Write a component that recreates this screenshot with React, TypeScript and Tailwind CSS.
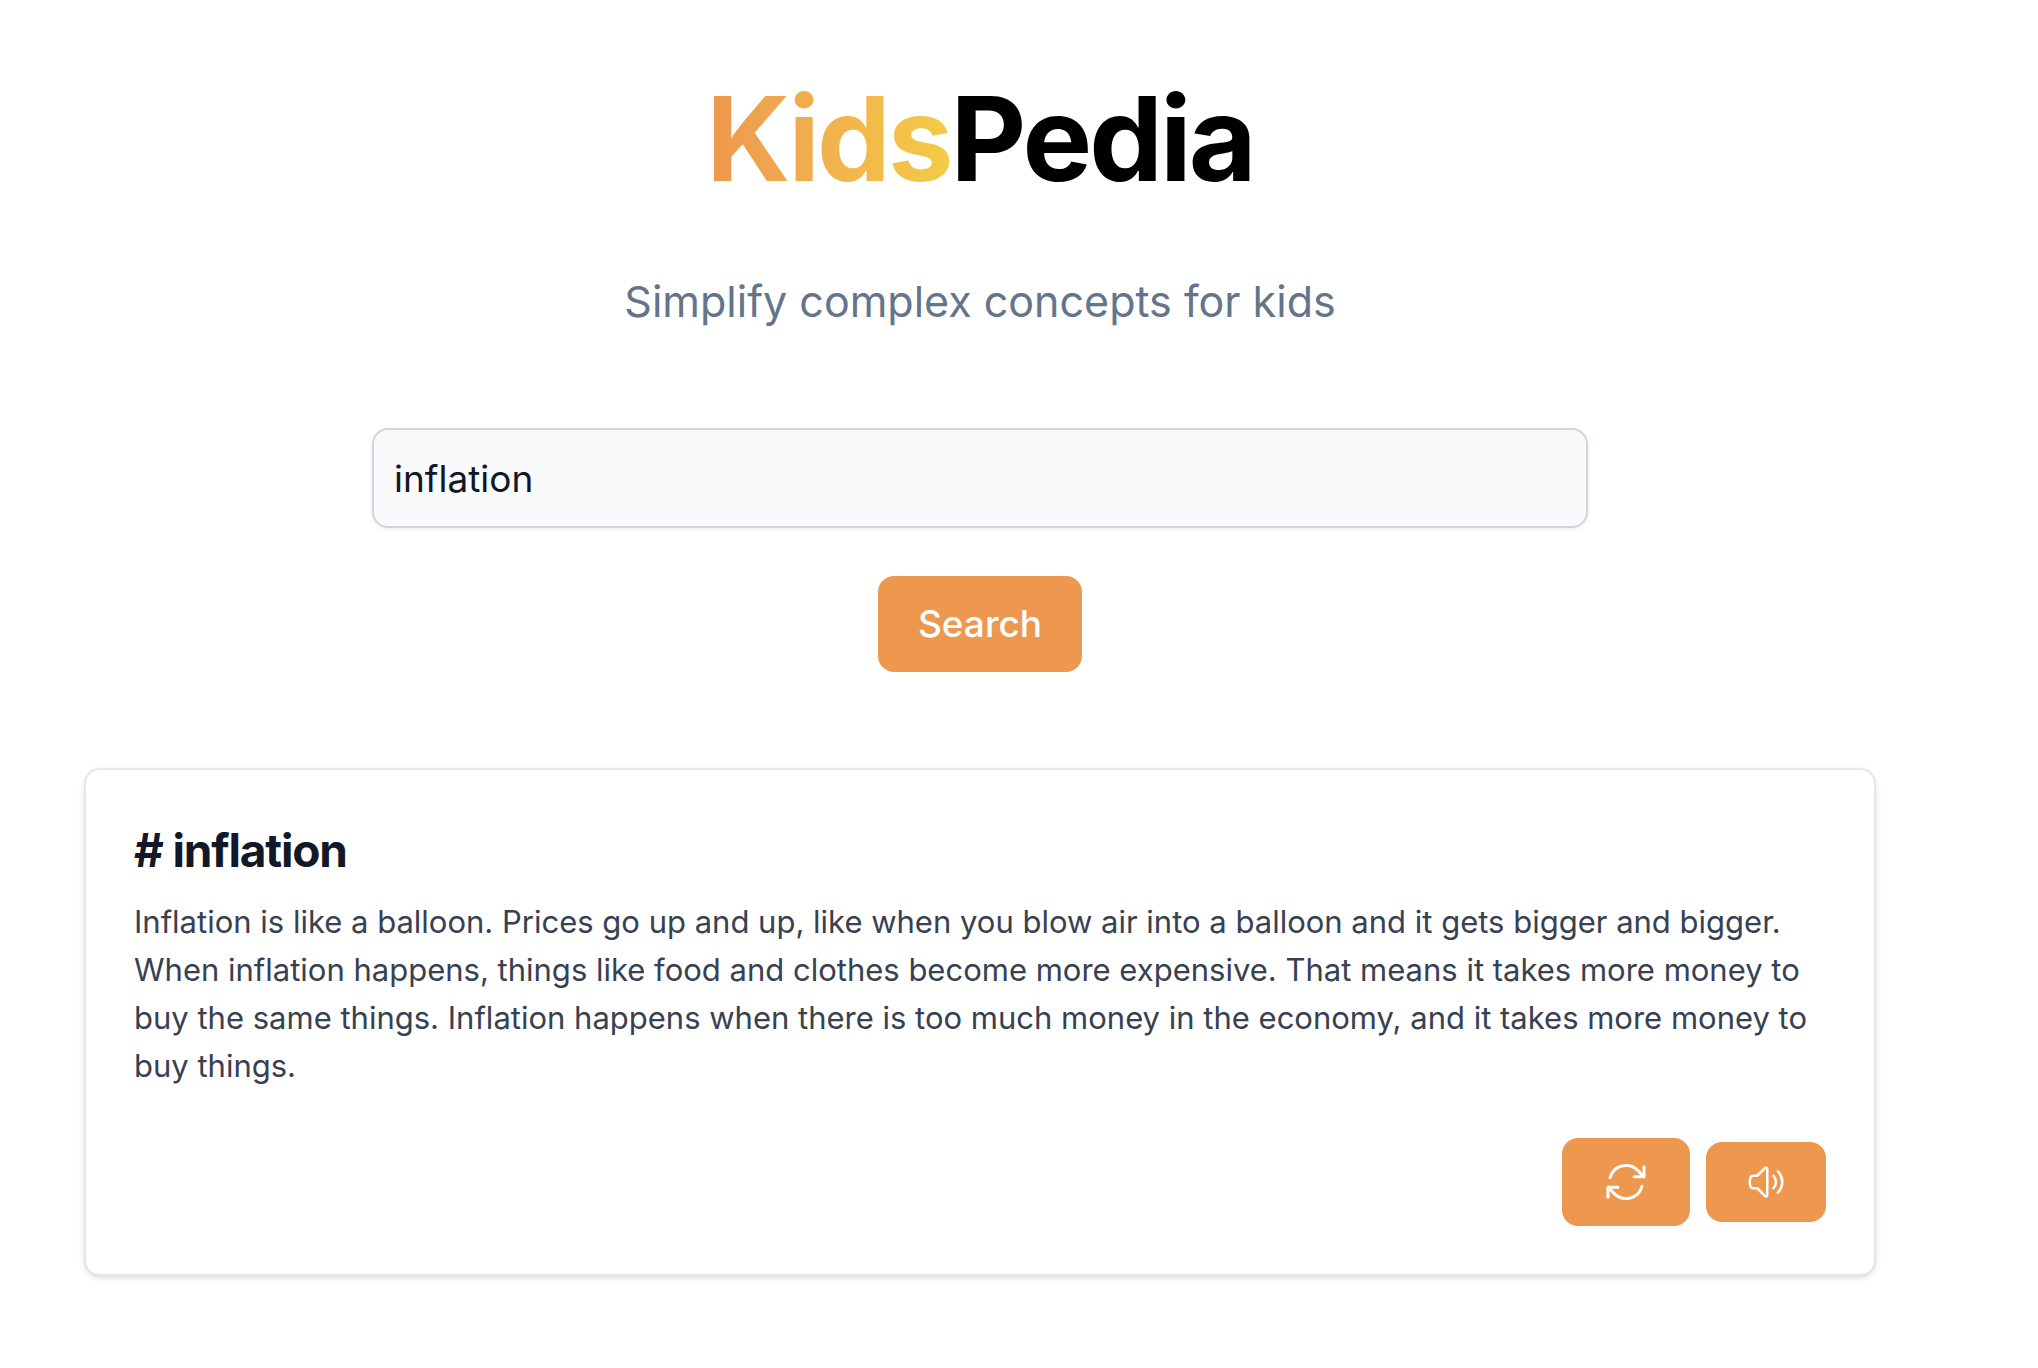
function RefreshIcon() {
  return (
    <svg className="size-12" viewBox="0 0 24 24" fill="none" stroke="currentColor" strokeWidth="1.5" strokeLinecap="round" strokeLinejoin="round" aria-hidden="true">
      <path d="M16.023 9.348h4.992v-.001M2.985 19.644v-4.992m0 0h4.992m-4.993 0l3.181 3.183a8.25 8.25 0 0013.803-3.7M4.031 9.865a8.25 8.25 0 0113.803-3.7l3.181 3.182m0-4.991v4.99" />
    </svg>
  );
}

function SpeakerIcon() {
  return (
    <svg className="size-10" viewBox="0 0 24 24" fill="none" stroke="currentColor" strokeWidth="1.5" strokeLinecap="round" strokeLinejoin="round" aria-hidden="true">
      <path d="M19.114 5.636a9 9 0 010 12.728M16.463 8.288a5.25 5.25 0 010 7.424M6.75 8.25l4.72-4.72a.75.75 0 011.28.53v15.88a.75.75 0 01-1.28.53l-4.72-4.72H4.51c-.88 0-1.704-.507-1.938-1.354A9.01 9.01 0 012.25 12c0-.83.112-1.633.322-2.396C2.806 8.756 3.63 8.25 4.51 8.25H6.75z" />
    </svg>
  );
}

export default function App() {
  return (
    <main className="min-h-screen bg-white pt-[79px] pr-[78px] pb-20 font-['Inter',sans-serif]">
      <header className="text-center">
        <h1 className="text-[117px] leading-[120px] font-bold tracking-tight text-black">
          <span className="bg-linear-to-r from-[#ed974f] to-[#f4cb46] bg-clip-text text-transparent">Kids</span>Pedia
        </h1>
        <p className="mt-[74px] text-[43px] leading-[56px] text-[#64748b]">Simplify complex concepts for kids</p>
      </header>

      <form className="mx-auto mt-[99px] flex max-w-[1216px] flex-col items-center gap-12" onSubmit={(e) => e.preventDefault()}>
        <input
          type="text"
          aria-label="Concept"
          defaultValue="inflation"
          className="h-[100px] w-full rounded-2xl border-2 border-[#d1d5db] bg-[#f9fafb] px-5 text-[37px] text-[#111827] shadow-[0_2px_4px_rgba(0,0,0,0.05)] outline-none"
        />
        <button type="submit" className="rounded-2xl bg-[#ed974f] px-10 py-5 text-[37px] leading-14 font-medium text-white">
          Search
        </button>
      </form>

      <article className="mx-auto mt-24 max-w-[1792px] rounded-2xl border-2 border-[#e5e7eb] bg-white p-12 shadow-[0_2px_6px_rgba(0,0,0,0.1),0_2px_4px_-2px_rgba(0,0,0,0.1)]">
        <h2 className="text-[46px] leading-16 font-bold tracking-tight text-[#111827]"># inflation</h2>
        <p className="mt-4 text-[31px] leading-12 text-[#374151]">
          Inflation is like a balloon. Prices go up and up, like when you blow air into a balloon and it gets bigger and bigger. When inflation happens, things like food and clothes become more expensive. That means it takes more money to buy the same things. Inflation happens when there is too much money in the economy, and it takes more money to buy things.
        </p>
        <div className="mt-12 flex items-center justify-end gap-4">
          <button type="button" aria-label="Regenerate" className="rounded-2xl bg-[#ed974f] px-10 py-5 text-white">
            <RefreshIcon />
          </button>
          <button type="button" aria-label="Read aloud" className="rounded-2xl bg-[#ed974f] px-10 py-5 text-white">
            <SpeakerIcon />
          </button>
        </div>
      </article>
    </main>
  );
}
